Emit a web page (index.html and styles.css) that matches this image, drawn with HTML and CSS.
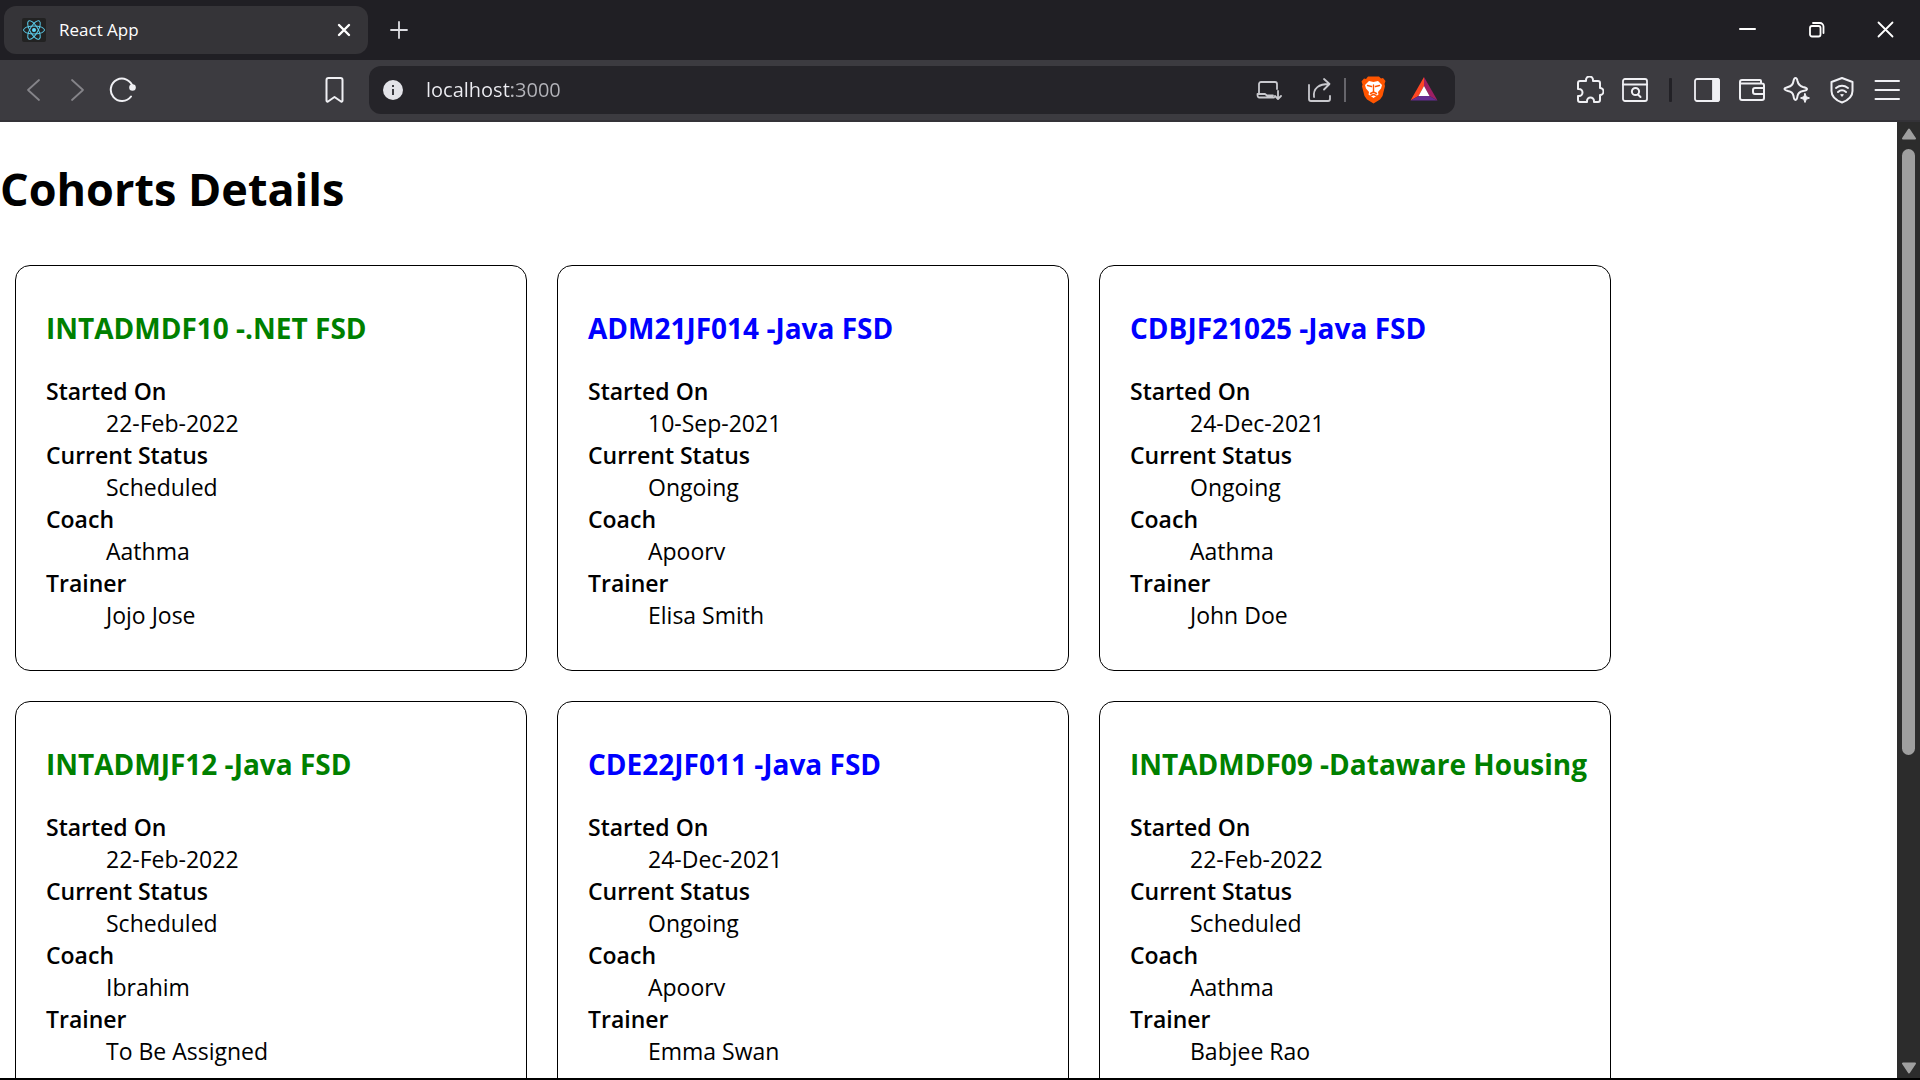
FILE: index.html
```html
<!DOCTYPE html>
<html lang="en">
<head>
<meta charset="utf-8">
<meta name="viewport" content="width=device-width, initial-scale=1">
<title>React App</title>
<link rel="stylesheet" href="styles.css">
</head>
<body>
<header class="tabs">
  <div class="tab">
    <svg class="favicon" viewBox="0 0 24 24" aria-hidden="true"><rect width="24" height="24" rx="2" fill="#222"/><g fill="none" stroke="#5ccfee"><ellipse cx="12" cy="12" rx="10.5" ry="4"/><ellipse cx="12" cy="12" rx="10.5" ry="4" transform="rotate(60 12 12)"/><ellipse cx="12" cy="12" rx="10.5" ry="4" transform="rotate(120 12 12)"/></g><circle cx="12" cy="12" r="2" fill="#61dafb"/></svg>
    <span class="tab-title">React App</span>
    <button class="tab-button" aria-label="Close tab"><svg class="icon" viewBox="0 0 28 28"><path d="M9 9l10 10M19 9L9 19" stroke-width="2.4"/></svg></button>
  </div>
  <button class="new-tab" aria-label="New tab"><svg class="icon" viewBox="0 0 28 28"><path d="M14 6v16M6 14h16"/></svg></button>
  <div class="window-controls">
    <button class="window-button" aria-label="Minimize"><svg class="icon" viewBox="0 0 28 28"><path d="M6 13h15" stroke-width="2"/></svg></button>
    <button class="window-button" aria-label="Restore"><svg class="icon" viewBox="0 0 28 28"><rect x="7" y="10" width="10.500" height="10.500" rx="2"/><path d="M10 7h7a3.500 3.500 0 0 1 3.500 3.500V17"/></svg></button>
    <button class="window-button" aria-label="Close"><svg class="icon" viewBox="0 0 28 28"><path d="M6.500 6.500l14 14M20.500 6.500l-14 14"/></svg></button>
  </div>
</header>
<nav class="toolbar" aria-label="Browser toolbar">
  <div class="nav-tools">
    <button class="tool tool-dim" aria-label="Back"><svg class="icon" viewBox="0 0 28 28"><path d="M20 4L9 14l11 10"/></svg></button>
    <button class="tool tool-dim" aria-label="Forward"><svg class="icon" viewBox="0 0 28 28"><path d="M8 4l11 10L8 24"/></svg></button>
    <button class="tool" aria-label="Reload"><svg class="icon" viewBox="0 0 28 28"><path d="M22 20.500a11.200 11.200 0 1 1 1.800-9.500" stroke-width="2"/><circle cx="23.500" cy="11.500" r="3.300" fill="currentColor" stroke="none"/></svg></button>
    <button class="tool tool-bookmark" aria-label="Bookmark this page"><svg class="icon" viewBox="0 0 28 28"><path d="M5.500 4a2 2 0 0 1 2-2h12a2 2 0 0 1 2 2v20.500q0 1.500-1.500 1l-6.500-4.500-6.500 4.500q-1.500.5-1.500-1z" stroke-width="2"/></svg></button>
  </div>
  <div class="address">
    <button class="site-info" aria-label="Site information"><svg class="icon" viewBox="0 0 28 28"><circle cx="14" cy="14" r="10" fill="#e3e3e8" stroke="none"/><path d="M14 13v6M14 9v2" stroke="#3b3b40" stroke-width="2" stroke-linecap="butt" class="butt"/></svg></button>
    <input class="url" type="text" aria-label="Address" value="localhost:3000" spellcheck="false">
    <button class="address-button" aria-label="Install app"><svg class="icon" viewBox="0 0 28 28"><path d="M4 17.500V8a2 2 0 0 1 2-2h14a2 2 0 0 1 2 2v5M19 21.500H4q-1.500 0-1.500-3.500H10l2 1.500h6M23 15v7M20 20l3 3 3-3"/></svg></button>
    <button class="address-button" aria-label="Share"><svg class="icon" viewBox="0 0 28 28"><path d="M4 9v14q0 2 2 2h17q2 0 2-2v-3M9 21C8 12 14 8 24 8M19 3l5.500 5-5.500 5.500"/></svg></button>
    <span class="address-rule"></span>
    <button class="address-button" aria-label="Brave Shields"><svg class="icon icon-filled" viewBox="0 0 28 28"><path fill="#ff5500" d="M8 .5h11l2 2 2-.500 2.500 3-1 3 .5 2-2.500 10-2.500 3.500-6.500 4-6.500-4L4.500 20 2 10.500l.5-2-1-3 2.500-3 2 .5z"/><path fill="#fff" d="M13.500 6l4.500-1 4 4-1 3.500-3 3.500.5 2.500-5 3.500-5-3.500.5-2.500-3-3.500L5 9l4-4z"/><path class="lines" d="M13.500 9v7M13.500 16l-3 1.500M13.500 16l3 1.500M7.500 9.500l4 1M19.500 9.500l-4 1M11 19.500l2.500-1 2.500 1" stroke="#ff5500" stroke-width="1.400" fill="none"/></svg></button>
    <button class="address-button" aria-label="Brave Rewards"><svg class="icon icon-filled" viewBox="0 0 28 28"><path fill="#ff4724" d="M14 1v9L8.500 20 .5 24.500z"/><path fill="#9e1f63" d="M14 1v9l5.500 10 8 4.500z"/><path fill="#662d91" d="M.5 24.500L8.500 20h11l8 4.500z"/><path fill="#fff" d="M14 10L8.500 20h11z"/></svg></button>
  </div>
  <div class="browser-tools">
    <button class="tool" aria-label="Extensions"><svg class="icon" viewBox="0 0 28 28"><path d="M4 5h6V4a3.500 3.500 0 0 1 7 0v1h5q2 0 2 2v5a3.500 3.500 0 0 1 0 7v5q0 2-2 2h-4v-1a3.500 3.500 0 0 0-7 0v1H4q-2 0-2-2v-4h1a3.500 3.500 0 0 0 0-7H2V7q0-2 2-2z" stroke-width="2"/></svg></button>
    <button class="tool" aria-label="Search tabs"><svg class="icon" viewBox="0 0 28 28"><rect x="2" y="3" width="24" height="22" rx="2"/><path d="M2 8.500h24M17 18.500l2.500 2.500" stroke-width="2"/><circle cx="14.500" cy="15.500" r="3.600" stroke-width="2"/></svg></button>
    <span class="tool-rule"></span>
    <button class="tool" aria-label="Sidebar"><svg class="icon" viewBox="0 0 28 28"><rect x="2" y="3" width="24" height="22" rx="2"/><path d="M20 3h4q2 0 2 2v18q0 2-2 2h-4z" fill="currentColor"/></svg></button>
    <button class="tool" aria-label="Wallet"><svg class="icon" viewBox="0 0 28 28"><path d="M23 7.500V5q0-1-1-1H4Q2 4 2 6v16q0 2 2 2h20q2 0 2-2V9.500q0-2-2-2H3M26 12h-9q-2 0-2 2v2q0 2 2 2h9" stroke-width="2"/></svg></button>
    <button class="tool" aria-label="Leo AI"><svg class="icon" viewBox="0 0 28 28"><path d="M12.500 2q1.500 0 2 3c.7 3.500 2 5 5.500 6 3.500.8 4 1.200 4 2s-.5 1.500-4 2c-3.500.7-5 2-5.500 5q-.5 4-2 4t-2-4c-.7-3.500-2-4.500-5.500-5Q1.500 14 1.500 13T5 11c3.500-.8 5-2.500 5.500-6q.5-3 2-3z" stroke-width="2"/><path d="M22 17.500l1.300 3.200 3.200 1.300-3.200 1.300L22 26.500l-1.300-3.200-3.200-1.300 3.200-1.300z" fill="currentColor" stroke-width="1"/></svg></button>
    <button class="tool" aria-label="VPN"><svg class="icon" viewBox="0 0 28 28"><path d="M14 2l10.500 4v9c0 6-5 9.500-10.500 11.500C8.500 24.500 3.500 21 3.500 15V6zM8 12q6-4.500 12 0M10 16q4-3.500 8 0" stroke-width="2"/><path d="M12 18.500q2-1 4 0l-2 2.500z" fill="currentColor" stroke="none"/></svg></button>
    <button class="tool" aria-label="Menu"><svg class="icon" viewBox="0 0 28 28"><path d="M2.500 5h23.500M2.500 14h23.500M2.500 23h23.500" stroke-width="2"/></svg></button>
  </div>
</nav>
<div class="view">
  <main class="page">
    <h1 class="page-title">Cohorts Details</h1>
    <div class="cohorts">
      <article class="card">
        <h2 class="card-title scheduled">INTADMDF10 -.NET FSD</h2>
        <dl class="details"><dt>Started On</dt><dd>22-Feb-2022</dd><dt>Current Status</dt><dd>Scheduled</dd><dt>Coach</dt><dd>Aathma</dd><dt>Trainer</dt><dd>Jojo Jose</dd></dl>
      </article>
      <article class="card">
        <h2 class="card-title ongoing">ADM21JF014 -Java FSD</h2>
        <dl class="details"><dt>Started On</dt><dd>10-Sep-2021</dd><dt>Current Status</dt><dd>Ongoing</dd><dt>Coach</dt><dd>Apoorv</dd><dt>Trainer</dt><dd>Elisa Smith</dd></dl>
      </article>
      <article class="card">
        <h2 class="card-title ongoing">CDBJF21025 -Java FSD</h2>
        <dl class="details"><dt>Started On</dt><dd>24-Dec-2021</dd><dt>Current Status</dt><dd>Ongoing</dd><dt>Coach</dt><dd>Aathma</dd><dt>Trainer</dt><dd>John Doe</dd></dl>
      </article>
      <article class="card">
        <h2 class="card-title scheduled">INTADMJF12 -Java FSD</h2>
        <dl class="details"><dt>Started On</dt><dd>22-Feb-2022</dd><dt>Current Status</dt><dd>Scheduled</dd><dt>Coach</dt><dd>Ibrahim</dd><dt>Trainer</dt><dd>To Be Assigned</dd></dl>
      </article>
      <article class="card">
        <h2 class="card-title ongoing">CDE22JF011 -Java FSD</h2>
        <dl class="details"><dt>Started On</dt><dd>24-Dec-2021</dd><dt>Current Status</dt><dd>Ongoing</dd><dt>Coach</dt><dd>Apoorv</dd><dt>Trainer</dt><dd>Emma Swan</dd></dl>
      </article>
      <article class="card">
        <h2 class="card-title scheduled">INTADMDF09 -Dataware Housing</h2>
        <dl class="details"><dt>Started On</dt><dd>22-Feb-2022</dd><dt>Current Status</dt><dd>Scheduled</dd><dt>Coach</dt><dd>Aathma</dd><dt>Trainer</dt><dd>Babjee Rao</dd></dl>
      </article>
    </div>
  </main>
  <div class="scrollbar" aria-hidden="true">
    <svg class="scroll-arrow" viewBox="0 0 14 12"><path d="M7 1.500L13 10.500H1z"/></svg>
    <div class="scroll-track"><div class="scroll-thumb"></div></div>
    <svg class="scroll-arrow" viewBox="0 0 14 12"><path d="M1 1.500h12L7 10.500z"/></svg>
  </div>
</div>
</body>
</html>
```
FILE: styles.css
```css
* { box-sizing: border-box; }
body {
  margin: 0;
  height: 100vh;
  display: flex;
  flex-direction: column;
  overflow: hidden;
  background: #000;
  font-family: "Open Sans", "Noto Sans", sans-serif;
}
button {
  display: flex;
  align-items: center;
  justify-content: center;
  flex: none;
  padding: 0;
  border: 0;
  background: none;
  color: inherit;
}
.icon {
  width: 28px;
  height: 28px;
  flex: none;
  fill: none;
  stroke: currentColor;
  stroke-width: 1.8;
  stroke-linecap: round;
  stroke-linejoin: round;
}
.icon-filled { stroke: none; }

/* Tab strip */
.tabs {
  display: flex;
  align-items: center;
  flex: none;
  height: 60px;
  padding-left: 4px;
  background: #201f24;
  color: #fff;
}
.tab {
  display: flex;
  align-items: center;
  width: 364px;
  height: 48px;
  padding: 0 10px 0 18px;
  border-radius: 12px;
  background: #353438;
}
.favicon { width: 24px; height: 24px; }
.tab-title { flex: 1; margin-left: 13px; padding-bottom: 2px; font-size: 17px; }
.tab-button { width: 28px; height: 28px; }
.new-tab { width: 62px; height: 48px; color: #dddde2; }
.window-controls { display: flex; margin-left: auto; }
.window-button { width: 69px; height: 60px; }

/* Toolbar */
.toolbar {
  display: flex;
  align-items: center;
  flex: none;
  height: 62px;
  padding-bottom: 1px;
  border-bottom: 2px solid #343338;
  background: #3c3b40;
  color: #f0f0f4;
}
.nav-tools { display: flex; width: 369px; padding: 0 12px 0 10px; }
.tool { width: 45px; height: 48px; }
.tool-dim { color: #858489; }
.tool-bookmark { margin-left: auto; }
.address {
  display: flex;
  align-items: center;
  flex: 1;
  height: 48px;
  padding: 0 6px 0 10px;
  border-radius: 12px;
  background: #252429;
  color: #c9c9ce;
}
.site-info { width: 28px; height: 48px; }
.url {
  flex: 1;
  min-width: 0;
  height: 48px;
  margin-left: 19px;
  padding: 0;
  border: 0;
  outline: 0;
  background: linear-gradient(90deg, #ededf2 86px, #b4b4ba 86px);
  background-clip: text;
  -webkit-background-clip: text;
  -webkit-text-fill-color: transparent;
  font: 20px "Open Sans", "Noto Sans", sans-serif;
}
.address-button { width: 50px; height: 48px; }
.address-rule { width: 2px; height: 24px; margin-right: 3px; background: #66656b; }
.browser-tools { display: flex; align-items: center; justify-content: flex-end; width: 465px; padding-right: 11px; }
.tool-rule { width: 3px; height: 24px; margin: 0 12px; border-radius: 1px; background: #222126; }

/* Page */
.view { display: flex; flex: 1; min-height: 0; margin-bottom: 2px; }
.page { flex: 1; overflow: hidden; background: #fff; color: #000; }
.page-title { margin: 35px 0 44px; font-size: 45px; line-height: 64px; }
.cohorts {
  display: grid;
  grid-template-columns: repeat(auto-fill, 512px);
  gap: 30px;
  padding: 0 15px 15px;
}
.card {
  padding: 44px 0 39px 30px;
  border: 1px solid #000;
  border-radius: 15px;
}
.card-title { margin: 0 0 28px; font-size: 28px; line-height: 37px; white-space: nowrap; }
.scheduled { color: green; }
.ongoing { color: blue; }
.details { margin: 0; font-size: 23px; line-height: 32px; }
.details dt { font-weight: 600; }
.details dd { margin-left: 60px; }

/* Scrollbar */
.scrollbar {
  display: flex;
  flex-direction: column;
  align-items: center;
  flex: none;
  width: 23px;
  padding: 6px 0 4px;
  background: #2c2c2c;
}
.scroll-arrow { width: 14px; height: 12px; fill: #9f9f9f; stroke: #9f9f9f; stroke-width: 2; stroke-linejoin: round; }
.scroll-track { flex: 1; padding: 9px 0 8px; }
.scroll-thumb { width: 13px; height: 67%; border-radius: 7px; background: #9f9f9f; }
```
